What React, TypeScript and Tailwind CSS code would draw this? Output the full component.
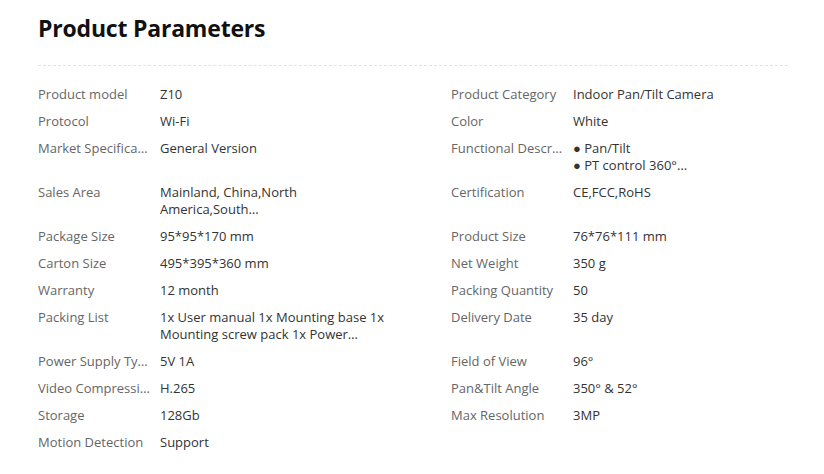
const rows: [string, string, string, string][] = [
  ['Product model', 'Z10', 'Product Category', 'Indoor Pan/Tilt Camera'],
  ['Protocol', 'Wi-Fi', 'Color', 'White'],
  ['Market Specifications', 'General Version', 'Functional Description', '● Pan/Tilt\n● PT control 360°\n● Two-way audio'],
  ['Sales Area', 'Mainland, China,North America,South America,Europe,Oceania,Southeast Asia', 'Certification', 'CE,FCC,RoHS'],
  ['Package Size', '95*95*170 mm', 'Product Size', '76*76*111 mm'],
  ['Carton Size', '495*395*360 mm', 'Net Weight', '350 g'],
  ['Warranty', '12 month', 'Packing Quantity', '50'],
  ['Packing List', '1x User manual 1x Mounting base 1x Mounting screw pack 1x Power adapter 1x Camera', 'Delivery Date', '35 day'],
  ['Power Supply Type', '5V 1A', 'Field of View', '96°'],
  ['Video Compression', 'H.265', 'Pan&Tilt Angle', '350° & 52°'],
  ['Storage', '128Gb', 'Max Resolution', '3MP'],
  ['Motion Detection', 'Support', '', ''],
]

function Cell({ label, value }: { label: string; value: string }) {
  if (!label) return <div />
  return (
    <div className="flex pb-[10px] pr-4">
      <div className="w-[122px] shrink-0 pr-[9px] truncate text-[#666]">{label}</div>
      <div className="flex-1 min-w-0 text-[#333] whitespace-pre-line line-clamp-2 max-w-[226px]">{value}</div>
    </div>
  )
}

export default function App() {
  return (
    <div className="w-[824px] h-[474px] bg-white px-[38px] pt-[12px]" style={{ fontFamily: '"Open Sans", "Noto Sans", sans-serif' }}>
      <h1 className="text-[23px] leading-[32px] font-bold text-[#111] tracking-[-0.2px]">Product Parameters</h1>
      <div className="mt-[21px] border-t border-dashed border-[#e2e2e2] w-[750px]" />
      <div className="mt-[20px] grid grid-cols-[413px_337px] text-[13px] leading-[17px]">
        {rows.map((r, i) => (
          <div key={i} className="contents">
            <Cell label={r[0]} value={r[1]} />
            <Cell label={r[2]} value={r[3]} />
          </div>
        ))}
      </div>
    </div>
  )
}
